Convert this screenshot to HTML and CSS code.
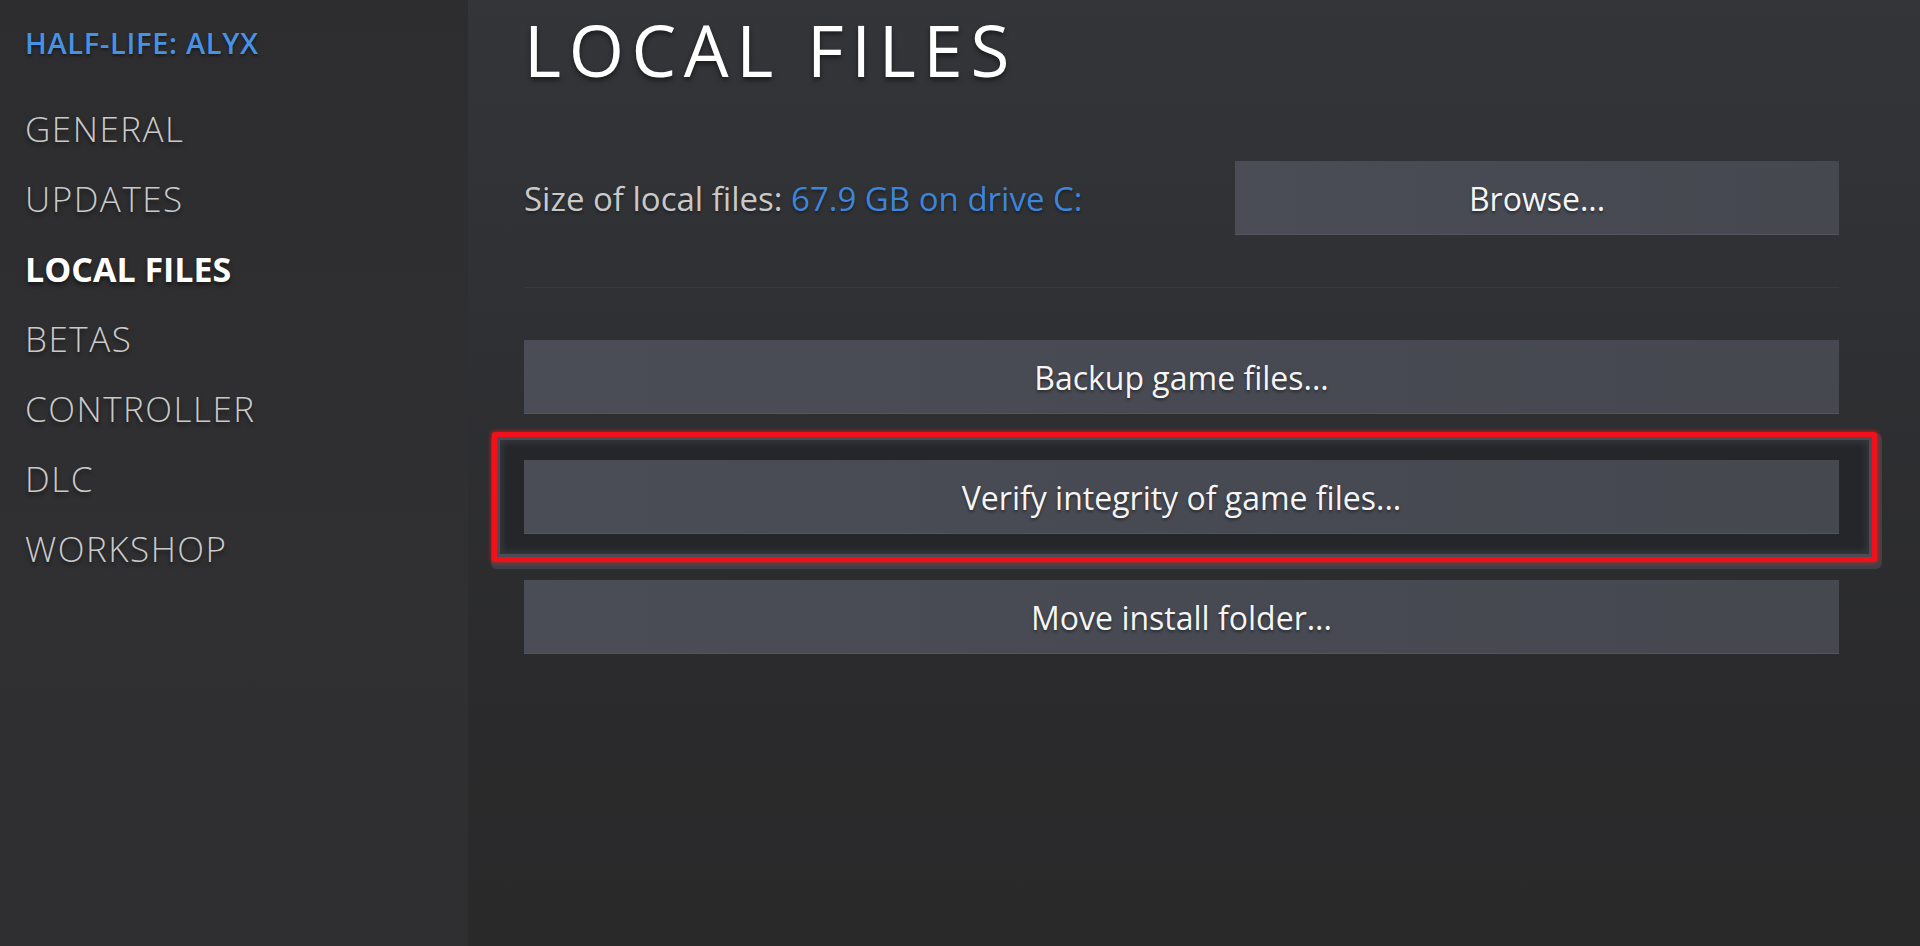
FILE: index.html
```html
<!DOCTYPE html>
<html lang="en">
<head>
<meta charset="utf-8">
<title>Half-Life: Alyx - Properties</title>
<link rel="stylesheet" href="styles.css">
</head>
<body>
<div class="app">
  <aside class="sidebar">
    <div class="game-title">HALF-LIFE: ALYX</div>
    <nav class="nav">
      <div class="nav-item">GENERAL</div>
      <div class="nav-item">UPDATES</div>
      <div class="nav-item active">LOCAL FILES</div>
      <div class="nav-item">BETAS</div>
      <div class="nav-item">CONTROLLER</div>
      <div class="nav-item">DLC</div>
      <div class="nav-item">WORKSHOP</div>
    </nav>
  </aside>
  <main class="content">
    <h1 class="heading">LOCAL FILES</h1>
    <div class="size-row">
      <div class="size-label">Size of local files: <span class="size-value">67.9 GB on drive C:</span></div>
      <button class="btn btn-browse">Browse...</button>
    </div>
    <div class="separator"></div>
    <div class="actions">
      <button class="btn">Backup game files...</button>
      <div class="highlight">
        <button class="btn">Verify integrity of game files...</button>
      </div>
      <button class="btn">Move install folder...</button>
    </div>
  </main>
</div>
</body>
</html>
```
FILE: styles.css
```css
html, body {
  margin: 0;
  height: 100%;
}

body {
  background: #2b2b2d;
  font-family: "Open Sans", "Noto Sans", "Liberation Sans", sans-serif;
  overflow: hidden;
}

.app {
  display: flex;
  height: 946px;
}

.sidebar {
  width: 468px;
  flex: none;
  box-sizing: border-box;
  padding: 23px 0 0 25px;
  background: linear-gradient(180deg, #2d2d2f 0%, #303032 60%, #2f2f31 100%);
}

.game-title {
  font-size: 29px;
  line-height: 40px;
  font-weight: 600;
  letter-spacing: 0.7px;
  color: #4592e6;
  margin-bottom: 31px;
  text-shadow: 0 2px 3px rgba(0, 0, 0, 0.45);
}

.nav-item {
  font-size: 35px;
  line-height: 70px;
  font-weight: 300;
  letter-spacing: 1.5px;
  color: #c9c9c9;
  text-shadow: 0 3px 4px rgba(0, 0, 0, 0.5);
}

.nav-item.active {
  font-size: 34px;
  font-weight: 700;
  letter-spacing: 0;
  color: #ffffff;
}

.content {
  flex: 1;
  box-sizing: border-box;
  padding: 10px 81px 0 56px;
  background: linear-gradient(180deg, #343539 0%, #2f3033 35%, #2b2b2d 70%, #29292a 100%);
}

.heading {
  margin: 0;
  font-size: 71px;
  line-height: 80px;
  font-weight: 400;
  letter-spacing: 7.6px;
  color: #ffffff;
  text-shadow: 0 3px 5px rgba(0, 0, 0, 0.5);
}

.size-row {
  margin-top: 71px;
  height: 74px;
  display: flex;
  align-items: center;
  justify-content: space-between;
}

.size-label {
  font-size: 33px;
  color: #c9c9c9;
  text-shadow: 0 2px 3px rgba(0, 0, 0, 0.4);
}

.size-value {
  color: #3d85dc;
}

.separator {
  height: 1px;
  margin: 52px 0;
  background: rgba(255, 255, 255, 0.04);
}

.btn {
  display: flex;
  align-items: center;
  justify-content: center;
  height: 74px;
  padding: 0;
  border: 0;
  background: linear-gradient(90deg, #4a4d55 0%, #474a52 50%, #45484f 100%);
  box-shadow: inset 0 -1px 0 #52555c;
  color: #f5f5f5;
  font-family: inherit;
  font-size: 32px;
  text-shadow: 0 2px 3px rgba(0, 0, 0, 0.45);
}

.btn-browse {
  width: 604px;
  flex: none;
}

.actions {
  display: flex;
  flex-direction: column;
  gap: 46px;
}

.actions .btn {
  width: 100%;
}

.highlight {
  position: relative;
  isolation: isolate;
}

.highlight::before {
  content: "";
  position: absolute;
  top: -28px;
  bottom: -28px;
  left: -32px;
  right: -38px;
  border: 5px solid #f2101a;
  border-radius: 3px;
  background: #25262a;
  box-shadow:
    inset 0 0 0 3px #4a4d55,
    inset 0 0 6px 6px #35373c,
    0 0 4px 1px rgba(255, 30, 30, 0.55),
    2px 4px 0 3px #3e4147;
  z-index: -1;
}
```
